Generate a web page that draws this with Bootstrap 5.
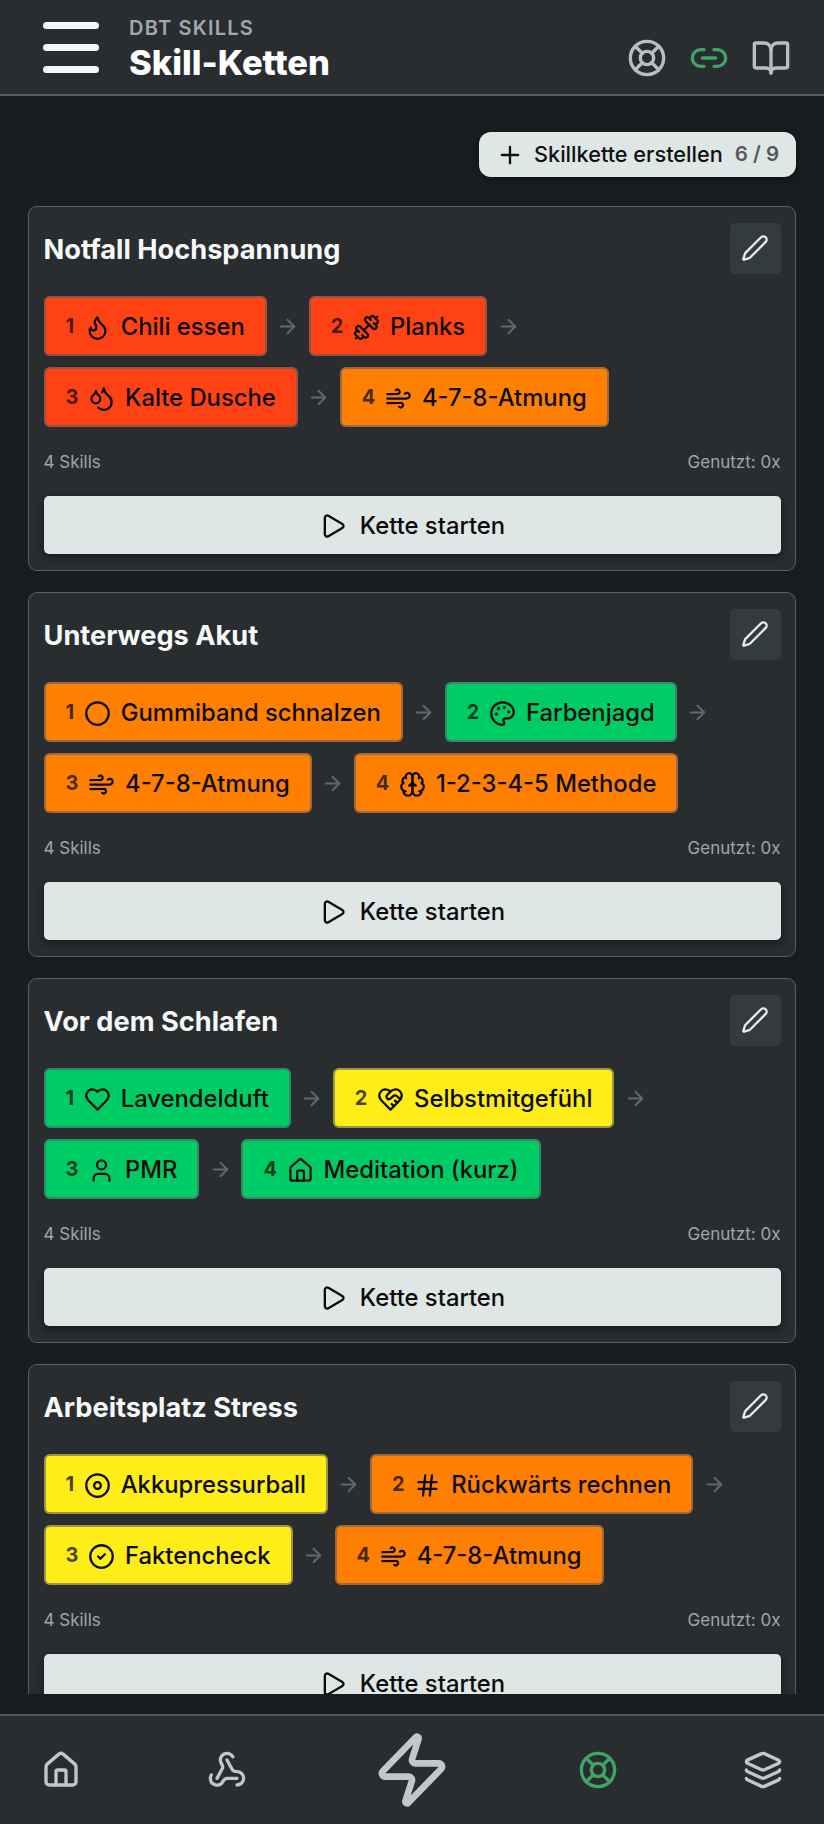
<!DOCTYPE html>
<html lang="de">
<head>
    <meta charset="UTF-8">
    <meta name="viewport" content="width=device-width, initial-scale=1.0">
    <title>Skill-Ketten</title>
    <link href="https://cdn.jsdelivr.net/npm/bootstrap@5.3.0/dist/css/bootstrap.min.css" rel="stylesheet">
    <style>
        html, body {
            height: 100%;
        }
        body {
            font-family: 'Inter', 'Liberation Sans', sans-serif;
            background-color: #1a1d1f;
            color: #fff;
            overflow: hidden;
        }
        svg.ico {
            fill: none;
            stroke: currentColor;
            stroke-width: 2;
            stroke-linecap: round;
            stroke-linejoin: round;
            flex: none;
        }
        .app-shell {
            height: 1824px;
        }
        .top-bar {
            height: 96px;
            background-color: #292d30;
            border-bottom: 2px solid #54595c;
            padding: 0 33px 0 43px;
        }
        .menu-btn {
            width: 56px;
            margin-right: 30px;
        }
        .menu-btn span {
            display: block;
            height: 7px;
            border-radius: 4px;
            background-color: #f4f6f7;
            margin-bottom: 15px;
        }
        .menu-btn span:last-child {
            margin-bottom: 0;
        }
        .brand-block {
            margin-top: 4px;
        }
        .brand-over {
            font-size: 20px;
            font-weight: 600;
            letter-spacing: 1.2px;
            line-height: 24px;
            color: #a3a8aa;
            margin-top: 1px;
        }
        .brand-title {
            font-size: 34.5px;
            font-weight: 800;
            line-height: 42px;
            margin-top: 2px;
            color: #fff;
        }
        .top-icons {
            gap: 22px;
            color: #b9bebf;
            margin-top: 22px;
        }
        .scroll-area {
            height: 1598px;
            overflow: hidden;
            padding: 36px 28px 0;
        }
        .create-btn {
            height: 45px;
            width: 317px;
            margin-bottom: 29px;
            padding: 0 0 0 17px;
            background-color: #dfe6e6;
            color: #111;
            border: 0;
            border-radius: 12px;
            font-size: 21.7px;
            font-weight: 500;
            box-shadow: 0 3px 8px rgba(0, 0, 0, .4);
            gap: 10px;
        }
        .create-btn small {
            font-size: 20.5px;
            font-weight: 600;
            color: #555a5c;
            margin-left: 2px;
        }
        .chain-card {
            background-color: #292d30;
            border: 1.5px solid #5a5f62;
            border-radius: 9px;
            padding: 15.5px 14.5px;
            margin-bottom: 21px;
            height: 365px;
        }
        .chain-title {
            font-size: 27.2px;
            font-weight: 700;
            line-height: 36px;
            color: #f6f8f8;
            margin: 4px 0 0;
        }
        .edit-btn {
            width: 51px;
            height: 51px;
            padding: 0;
            border: 0;
            border-radius: 5px;
            background-color: #343b3e;
            color: #e6eaea;
        }
        .chain-row {
            column-gap: 9.5px;
            row-gap: 11px;
            margin-top: 22.5px;
            height: 131.5px;
            align-content: flex-start;
        }
        .skill-chip {
            height: 60px;
            padding: 2px 20px 0;
            border: 2px solid rgba(90, 92, 100, .6);
            border-radius: 6px;
            color: #0c0c0c;
            font-size: 23.8px;
            font-weight: 500;
            gap: 10px;
        }
        .skill-num {
            font-size: 20px;
            font-weight: 700;
            opacity: .75;
            margin-top: -2px;
            margin-right: -.4px;
        }
        .tone-red { background-color: #ff4213; }
        .tone-orange { background-color: #ff8000; }
        .tone-green { background-color: #00cc66; }
        .tone-yellow { background-color: #ffed18; }
        .step-arrow {
            color: #62686b;
        }
        .chain-stats {
            font-size: 17px;
            line-height: 24px;
            color: #a0a5a7;
            margin-top: 22px;
            margin-bottom: 22px;
        }
        .start-btn {
            height: 58px;
            padding-top: 8px;
            background-color: #dfe6e6;
            color: #0c0c0c;
            border: 0;
            border-radius: 5px;
            font-size: 23.8px;
            font-weight: 500;
            box-shadow: 0 3px 8px rgba(0, 0, 0, .45);
            gap: 13px;
        }
        .gap-strip {
            height: 20px;
        }
        .bottom-bar {
            height: 110px;
            background-color: #292d30;
            border-top: 2px solid #54595c;
            padding: 0 41px;
            color: #c2c7c8;
        }
        .icon-green {
            color: #3da565;
        }
    </style>
</head>
<body>
    <svg width="0" height="0" class="position-absolute">
        <symbol id="i-buoy" viewBox="0 0 24 24"><circle cx="12" cy="12" r="10"/><path d="m4.93 4.93 4.24 4.24"/><path d="m14.83 9.17 4.24-4.24"/><path d="m14.83 14.83 4.24 4.24"/><path d="m9.17 14.83-4.24 4.24"/><circle cx="12" cy="12" r="4"/></symbol>
        <symbol id="i-link" viewBox="0 0 24 24"><path d="M9 17H7A5 5 0 0 1 7 7h2"/><path d="M15 7h2a5 5 0 1 1 0 10h-2"/><line x1="8" x2="16" y1="12" y2="12"/></symbol>
        <symbol id="i-book" viewBox="0 0 24 24"><path d="M12 7v14"/><path d="M3 18a1 1 0 0 1-1-1V4a1 1 0 0 1 1-1h5a4 4 0 0 1 4 4 4 4 0 0 1 4-4h5a1 1 0 0 1 1 1v13a1 1 0 0 1-1 1h-6a3 3 0 0 0-3 3 3 3 0 0 0-3-3z"/></symbol>
        <symbol id="i-plus" viewBox="0 0 24 24"><path d="M5 12h14"/><path d="M12 5v14"/></symbol>
        <symbol id="i-pen" viewBox="0 0 24 24"><path d="M21.174 6.812a1 1 0 0 0-3.986-3.987L3.842 16.174a2 2 0 0 0-.5.83l-1.321 4.352a.5.5 0 0 0 .623.622l4.353-1.32a2 2 0 0 0 .83-.497z"/></symbol>
        <symbol id="i-arrow" viewBox="0 0 24 24"><path d="M5 12h14"/><path d="m12 5 7 7-7 7"/></symbol>
        <symbol id="i-play" viewBox="0 0 24 24"><path d="M5 5a2 2 0 0 1 3.008-1.728l11.997 6.998a2 2 0 0 1 .003 3.458l-12 7A2 2 0 0 1 5 19z"/></symbol>
        <symbol id="i-flame" viewBox="0 0 24 24"><path d="M8.5 14.5A2.5 2.5 0 0 0 11 12c0-1.38-.5-2-1-3-1.072-2.143-.224-4.054 2-6 .5 2.5 2 4.9 4 6.5 2 1.6 3 3.5 3 5.5a7 7 0 1 1-14 0c0-1.153.433-2.294 1-3a2.5 2.5 0 0 0 2.5 2.5z"/></symbol>
        <symbol id="i-dumbbell" viewBox="0 0 24 24"><path d="M17.596 12.768a2 2 0 1 0 2.829-2.829l-1.768-1.767a2 2 0 0 0 2.828-2.829l-2.828-2.828a2 2 0 0 0-2.829 2.828l-1.767-1.768a2 2 0 1 0-2.829 2.829z"/><path d="m2.5 21.5 1.4-1.4"/><path d="m20.1 3.9 1.4-1.4"/><path d="M5.343 21.485a2 2 0 1 0 2.829-2.828l1.767 1.768a2 2 0 1 0 2.829-2.829l-6.364-6.364a2 2 0 1 0-2.829 2.829l1.768 1.767a2 2 0 0 0-2.828 2.829z"/><path d="m9.6 14.4 4.8-4.8"/></symbol>
        <symbol id="i-droplets" viewBox="0 0 24 24"><path d="M7 16.3c2.2 0 4-1.83 4-4.05 0-1.16-.57-2.26-1.71-3.19S7.29 6.75 7 5.3c-.29 1.45-1.14 2.84-2.29 3.76S3 11.1 3 12.25c0 2.22 1.8 4.05 4 4.05z"/><path d="M12.56 6.6A10.97 10.97 0 0 0 14 3.02c.5 2.5 2 4.9 4 6.5s3 3.5 3 5.5a6.98 6.98 0 0 1-11.91 4.97"/></symbol>
        <symbol id="i-wind" viewBox="0 0 24 24"><path d="M17.7 7.7a2.5 2.5 0 1 1 1.8 4.3H2"/><path d="M9.6 4.6A2 2 0 1 1 11 8H2"/><path d="M12.6 19.4A2 2 0 1 0 14 16H2"/></symbol>
        <symbol id="i-circle" viewBox="0 0 24 24"><circle cx="12" cy="12" r="10"/></symbol>
        <symbol id="i-palette" viewBox="0 0 24 24"><circle cx="13.5" cy="6.5" r=".5" fill="currentColor"/><circle cx="17.5" cy="10.5" r=".5" fill="currentColor"/><circle cx="8.5" cy="7.5" r=".5" fill="currentColor"/><circle cx="6.5" cy="12.5" r=".5" fill="currentColor"/><path d="M12 2C6.5 2 2 6.5 2 12s4.5 10 10 10c.926 0 1.648-.746 1.648-1.688 0-.437-.18-.835-.437-1.125-.29-.289-.438-.652-.438-1.125a1.64 1.64 0 0 1 1.668-1.668h1.996c3.051 0 5.555-2.503 5.555-5.554C21.965 6.012 17.461 2 12 2z"/></symbol>
        <symbol id="i-brain" viewBox="0 0 24 24"><path d="M12 5a3 3 0 1 0-5.997.125 4 4 0 0 0-2.526 5.77 4 4 0 0 0 .556 6.588A4 4 0 1 0 12 18Z"/><path d="M12 5a3 3 0 1 1 5.997.125 4 4 0 0 1 2.526 5.77 4 4 0 0 1-.556 6.588A4 4 0 1 1 12 18Z"/><path d="M15 13a4.5 4.5 0 0 1-3-4 4.5 4.5 0 0 1-3 4"/><path d="M17.599 6.5a3 3 0 0 0 .399-1.375"/><path d="M6.003 5.125A3 3 0 0 0 6.401 6.5"/><path d="M3.477 10.896a4 4 0 0 1 .585-.396"/><path d="M19.938 10.5a4 4 0 0 1 .585.396"/><path d="M6 18a4 4 0 0 1-1.967-.516"/><path d="M19.967 17.484A4 4 0 0 1 18 18"/></symbol>
        <symbol id="i-heart" viewBox="0 0 24 24"><path d="M19 14c1.49-1.46 3-3.21 3-5.5A5.5 5.5 0 0 0 16.5 3c-1.76 0-3 .5-4.5 2-1.5-1.5-2.74-2-4.5-2A5.5 5.5 0 0 0 2 8.5c0 2.3 1.5 4.05 3 5.5l7 7Z"/></symbol>
        <symbol id="i-handshake" viewBox="0 0 24 24"><path d="M19 14c1.49-1.46 3-3.21 3-5.5A5.5 5.5 0 0 0 16.5 3c-1.76 0-3 .5-4.5 2-1.5-1.5-2.74-2-4.5-2A5.5 5.5 0 0 0 2 8.5c0 2.3 1.5 4.05 3 5.5l7 7Z"/><path d="M12 5 9.04 7.96a2.17 2.17 0 0 0 0 3.08c.82.82 2.13.85 3 .07l2.07-1.9a2.82 2.82 0 0 1 3.79 0l2.96 2.66"/><path d="m18 15-2-2"/><path d="m15 18-2-2"/></symbol>
        <symbol id="i-user" viewBox="0 0 24 24"><path d="M19 21v-2a4 4 0 0 0-4-4H9a4 4 0 0 0-4 4v2"/><circle cx="12" cy="7" r="4"/></symbol>
        <symbol id="i-house" viewBox="0 0 24 24"><path d="M15 21v-8a1 1 0 0 0-1-1h-4a1 1 0 0 0-1 1v8"/><path d="M3 10a2 2 0 0 1 .709-1.528l7-5.999a2 2 0 0 1 2.582 0l7 5.999A2 2 0 0 1 21 10v9a2 2 0 0 1-2 2H5a2 2 0 0 1-2-2z"/></symbol>
        <symbol id="i-dot" viewBox="0 0 24 24"><circle cx="12" cy="12" r="10"/><circle cx="12" cy="12" r="3"/></symbol>
        <symbol id="i-hash" viewBox="0 0 24 24"><line x1="4" x2="20" y1="9" y2="9"/><line x1="4" x2="20" y1="15" y2="15"/><line x1="10" x2="8" y1="3" y2="21"/><line x1="16" x2="14" y1="3" y2="21"/></symbol>
        <symbol id="i-check" viewBox="0 0 24 24"><circle cx="12" cy="12" r="10"/><path d="m9 12 2 2 4-4"/></symbol>
        <symbol id="i-webhook" viewBox="0 0 24 24"><path d="M18 16.98h-5.99c-1.1 0-1.95.94-2.48 1.9A4 4 0 0 1 2 17c.01-.7.2-1.4.57-2"/><path d="m6 17 3.13-5.78c.53-.97.1-2.18-.5-3.1a4 4 0 1 1 6.89-4.06"/><path d="m12 6 3.13 5.73C15.66 12.7 16.9 13 18 13a4 4 0 0 1 0 8"/></symbol>
        <symbol id="i-zap" viewBox="0 0 24 24"><path d="M4 14a1 1 0 0 1-.78-1.63l9.9-10.2a.5.5 0 0 1 .86.46l-1.92 6.02A1 1 0 0 0 13 10h7a1 1 0 0 1 .78 1.63l-9.9 10.2a.5.5 0 0 1-.86-.46l1.92-6.02A1 1 0 0 0 11 14z"/></symbol>
        <symbol id="i-layers" viewBox="0 0 24 24"><path d="M12.83 2.18a2 2 0 0 0-1.66 0L2.6 6.08a1 1 0 0 0 0 1.83l8.58 3.91a2 2 0 0 0 1.66 0l8.58-3.9a1 1 0 0 0 0-1.83z"/><path d="M2 12a1 1 0 0 0 .58.91l8.6 3.91a2 2 0 0 0 1.65 0l8.58-3.9A1 1 0 0 0 22 12"/><path d="M2 17a1 1 0 0 0 .58.91l8.6 3.91a2 2 0 0 0 1.65 0l8.58-3.9A1 1 0 0 0 22 17"/></symbol>
    </svg>

    <div class="app-shell d-flex flex-column">
        <header class="top-bar d-flex align-items-center">
            <div class="menu-btn"><span></span><span></span><span></span></div>
            <div class="brand-block flex-grow-1">
                <div class="brand-over">DBT SKILLS</div>
                <div class="brand-title">Skill-Ketten</div>
            </div>
            <div class="top-icons d-flex align-items-center">
                <svg class="ico" width="40" height="40"><use href="#i-buoy"/></svg>
                <svg class="ico icon-green" width="40" height="40"><use href="#i-link"/></svg>
                <svg class="ico" width="40" height="40"><use href="#i-book"/></svg>
            </div>
        </header>

        <main class="scroll-area">
            <div class="d-flex justify-content-end">
                <button class="create-btn btn d-flex align-items-center" type="button">
                    <svg class="ico" width="28" height="28"><use href="#i-plus"/></svg>
                    <span>Skillkette erstellen</span>
                    <small>6 / 9</small>
                </button>
            </div>
            <div id="chains"></div>
        </main>

        <div class="gap-strip"></div>

        <nav class="bottom-bar d-flex align-items-center justify-content-between">
            <svg class="ico" width="40" height="40"><use href="#i-house"/></svg>
            <svg class="ico" width="40" height="40"><use href="#i-webhook"/></svg>
            <svg class="ico" width="80" height="80"><use href="#i-zap"/></svg>
            <svg class="ico icon-green" width="40" height="40"><use href="#i-buoy"/></svg>
            <svg class="ico" width="40" height="40"><use href="#i-layers"/></svg>
        </nav>
    </div>

    <script src="https://cdn.jsdelivr.net/npm/bootstrap@5.3.0/dist/js/bootstrap.bundle.min.js"></script>
    <script>
        const ketten = [
            { name: 'Notfall Hochspannung', skills: [
                ['red', 'flame', 'Chili essen'], ['red', 'dumbbell', 'Planks'],
                ['red', 'droplets', 'Kalte Dusche'], ['orange', 'wind', '4-7-8-Atmung']] },
            { name: 'Unterwegs Akut', skills: [
                ['orange', 'circle', 'Gummiband schnalzen'], ['green', 'palette', 'Farbenjagd'],
                ['orange', 'wind', '4-7-8-Atmung'], ['orange', 'brain', '1-2-3-4-5 Methode']] },
            { name: 'Vor dem Schlafen', skills: [
                ['green', 'heart', 'Lavendelduft'], ['yellow', 'handshake', 'Selbstmitgefühl'],
                ['green', 'user', 'PMR'], ['green', 'house', 'Meditation (kurz)']] },
            { name: 'Arbeitsplatz Stress', skills: [
                ['yellow', 'dot', 'Akkupressurball'], ['orange', 'hash', 'Rückwärts rechnen'],
                ['yellow', 'check', 'Faktencheck'], ['orange', 'wind', '4-7-8-Atmung']] }
        ];

        function icon(name, size) {
            return `<svg class="ico" width="${size}" height="${size}"><use href="#i-${name}"/></svg>`;
        }

        function chipHtml(skill, index, last) {
            const chip = `<div class="skill-chip tone-${skill[0]} d-flex align-items-center">
                <span class="skill-num">${index + 1}</span>${icon(skill[1], 27)}<span>${skill[2]}</span></div>`;
            const arrow = last ? '' : `<div class="step-arrow d-flex align-items-center">${icon('arrow', 23)}</div>`;
            return chip + arrow;
        }

        document.getElementById('chains').innerHTML = ketten.map(kette => `
            <section class="chain-card">
                <div class="d-flex justify-content-between align-items-center">
                    <h2 class="chain-title">${kette.name}</h2>
                    <button class="edit-btn btn d-flex align-items-center justify-content-center" type="button">${icon('pen', 28)}</button>
                </div>
                <div class="chain-row d-flex flex-wrap">
                    ${kette.skills.map((s, i) => chipHtml(s, i, i === kette.skills.length - 1)).join('')}
                </div>
                <div class="chain-stats d-flex justify-content-between">
                    <span>4 Skills</span><span>Genutzt: 0x</span>
                </div>
                <button class="start-btn btn w-100 d-flex align-items-center justify-content-center" type="button">
                    ${icon('play', 28)}<span>Kette starten</span>
                </button>
            </section>`).join('');
    </script>
</body>
</html>
